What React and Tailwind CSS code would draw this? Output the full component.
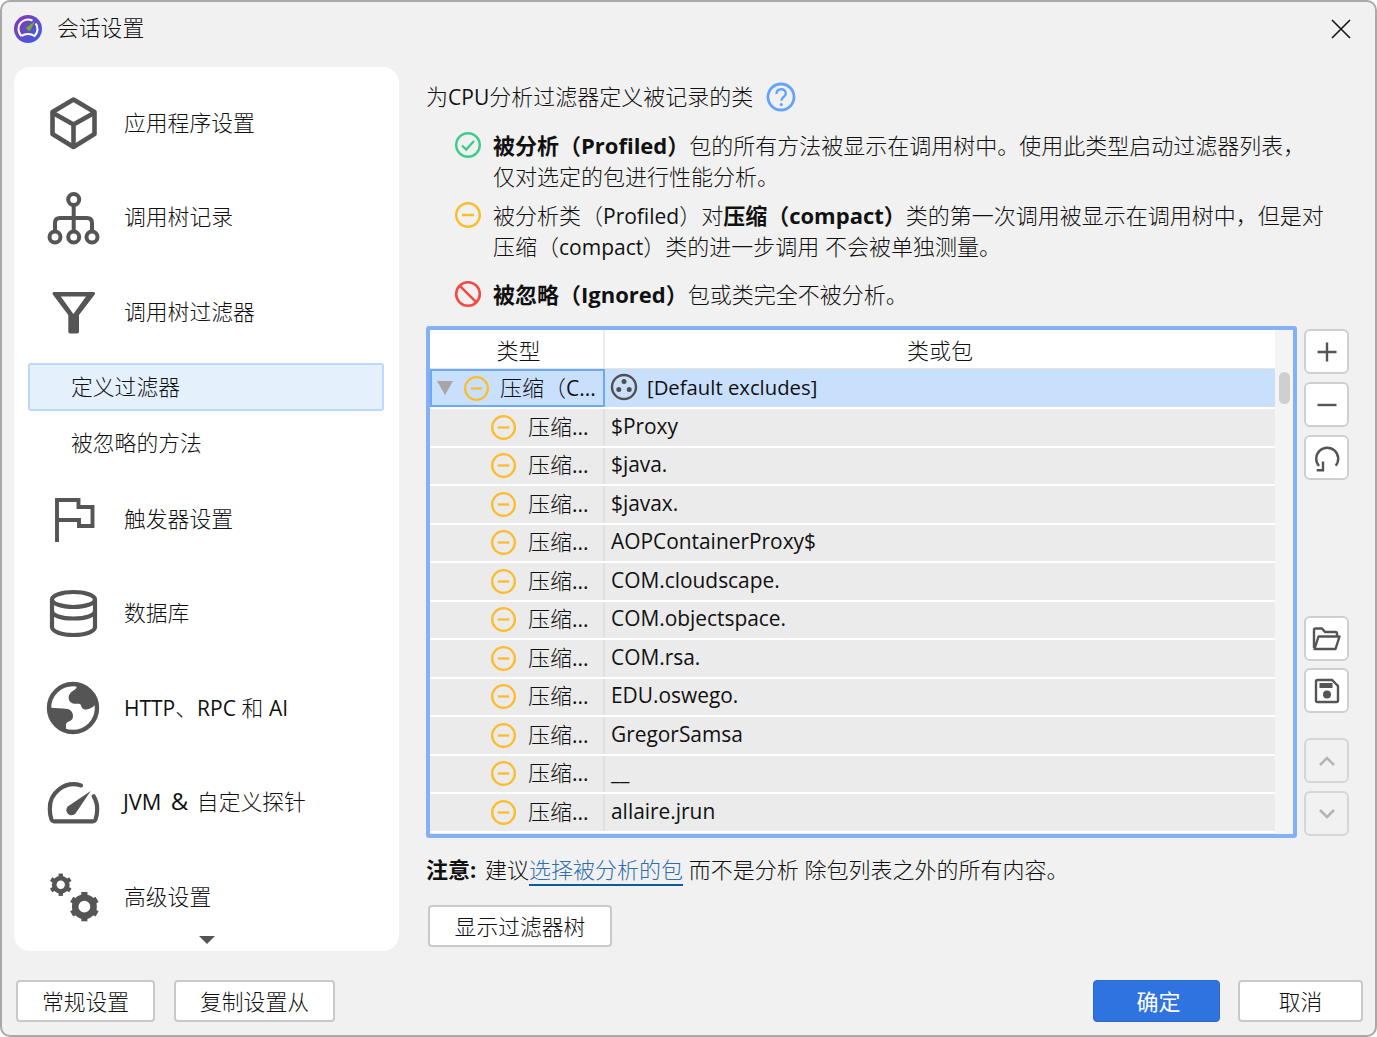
import React from "react";

const FONT = '"Open Sans","Noto Sans CJK SC",sans-serif';
const Dark = "#555555";

const Minus = ({ size = 28 }) => (
  <svg width={size} height={size} viewBox="0 0 28 28" className="shrink-0">
    <circle cx="14" cy="14" r="11.8" fill="none" stroke="#fdbc2c" strokeWidth="2.4" />
    <line x1="8" y1="14" x2="20" y2="14" stroke="#fdbc2c" strokeWidth="2.4" />
  </svg>
);
const Check = () => (
  <svg width="28" height="28" viewBox="0 0 28 28" className="shrink-0">
    <circle cx="14" cy="14" r="11.8" fill="none" stroke="#3ecb8a" strokeWidth="2.4" />
    <path d="M8 14.5l4.2 4L20 10" fill="none" stroke="#3ecb8a" strokeWidth="2.4" />
  </svg>
);
const Ban = () => (
  <svg width="28" height="28" viewBox="0 0 28 28" className="shrink-0">
    <circle cx="14" cy="14" r="11.8" fill="none" stroke="#f44a45" strokeWidth="2.6" />
    <line x1="5.8" y1="5.8" x2="22.2" y2="22.2" stroke="#f44a45" strokeWidth="2.6" />
  </svg>
);

const Cube = () => (
  <svg width="56" height="56" viewBox="0 0 56 56" fill="none" stroke={Dark} strokeWidth="4.6" strokeLinejoin="round">
    <path d="M28.500 4.500L49.500 17v22L28.500 52 7.500 39V17z" />
    <path d="M8 18l20.500 11.500L49 18M28.500 29.500V52" />
  </svg>
);
const TreeIcon = () => (
  <svg width="56" height="56" viewBox="0 0 56 56" fill="none" stroke={Dark} strokeWidth="4">
    <circle cx="28.700" cy="9.500" r="5.500" />
    <circle cx="10" cy="47" r="5.500" />
    <circle cx="28.700" cy="47" r="5.500" />
    <circle cx="47" cy="47" r="5.500" />
    <path d="M28.700 15v26.500M10 41.500V33q0-5 5-5h27q5 0 5 5v8.500" />
  </svg>
);
const FunnelIcon = () => (
  <svg width="56" height="56" viewBox="0 0 56 56" fill={Dark}>
    <path d="M9 8h39.500a1.500 1.500 0 0 1 1.200 2.400L34 31v16.500a2 2 0 0 1-2 2h-6.700a2 2 0 0 1-2-2V31L7.800 10.400A1.500 1.500 0 0 1 9 8zM15.800 12.400L28.400 30 41 12.400z" fillRule="evenodd" />
  </svg>
);
const FlagIcon = () => (
  <svg width="56" height="56" viewBox="0 0 56 56" fill="none" stroke={Dark} strokeWidth="3.900">
    <path d="M12 51V9h21.500v7h14v19H34v-6H12" />
  </svg>
);
const DbIcon = () => (
  <svg width="56" height="56" viewBox="0 0 56 56" fill="none" stroke={Dark} strokeWidth="4.200">
    <ellipse cx="28.500" cy="13.500" rx="21.500" ry="7.500" />
    <path d="M7 13.500V41c0 4.500 9.600 8 21.500 8S50 45.500 50 41V13.500" />
    <path d="M7 25c0 4.500 9.600 7.500 21.500 7.500S50 29.500 50 25" />
  </svg>
);
const GlobeIcon = () => (
  <svg width="56" height="56" viewBox="0 0 56 56">
    <circle cx="28" cy="28" r="24" fill="#fff" stroke={Dark} strokeWidth="4.400" />
    <path d="M31 5c.8 1.500.8 3-.5 4-1.500 1.500-4 2-5.500 4.500-1.500 2-1.800 5-.8 7 1 2 3 3.200 5.500 3.200h4.300c1.500 0 2 1.500 2.500 3 .7 2 2.500 3 5 2.800 3-.3 6-2.200 8.500-4.500.5-1 1-2 1-3C50 14 41 6 31 5z" fill={Dark} />
    <path d="M5 27.500c5 1.200 12 .5 17.500 1.500 3 .6 5.500 3.500 5.500 6.500 0 2.500-.5 4.500-3 5.500-2.500 1-4 1.500-4 4v5.500C12 48 4.500 38 5 27.500z" fill={Dark} />
  </svg>
);
const GaugeIcon = () => (
  <svg width="56" height="56" viewBox="0 0 56 56" fill="none" stroke={Dark} strokeWidth="4.200">
    <path d="M36 10.400A24 24 0 0 0 4.800 34c0 4 .5 7.500 1.700 10.500q.8 1.800 2.500 1.800h39q1.700 0 2.500-1.800c1.200-3 1.700-6.500 1.700-10.500 0-4.500-1.200-9-3.500-12.700" strokeLinecap="round" />
    <path d="M45.700 16L30.500 38.500a5.200 5.200 0 0 1-7.800-7z" fill={Dark} stroke="none" />
  </svg>
);
const Gear = ({ r, w, cx, cy, tw, th }) => (
  <g>
    <circle cx={cx} cy={cy} r={r} fill="none" stroke={Dark} strokeWidth={w} />
    {[0, 60, 120, 180, 240, 300].map((a) => (
      <rect key={a} x={cx - tw / 2} y={cy - r - w / 2 - th} width={tw} height={th + 1} fill={Dark} transform={`rotate(${a} ${cx} ${cy})`} />
    ))}
  </g>
);
const GearsIcon = () => (
  <svg width="64" height="60" viewBox="0 0 64 60">
    <Gear cx={18} cy={16} r={7.500} w={5.500} tw={5} th={2.500} />
    <Gear cx={45} cy={41} r={10.500} w={7.500} tw={7} th={2.500} />
  </svg>
);

const SideItem = ({ icon, label }) => (
  <div className="flex h-[94.5px] items-center pl-[31px]">
    <div className="flex w-[56px] justify-center">{icon}</div>
    <span className="ml-[23px] pb-[2px]">{label}</span>
  </div>
);

const Btn = ({ children, className = "" }) => (
  <div className={`flex items-center justify-center rounded-[4px] border-2 border-[#c9c9c9] bg-white text-[21.800px] ${className}`}>{children}</div>
);

const IconBtn = ({ children, className = "", off }) => (
  <div className={`flex h-[45px] w-[45px] items-center justify-center rounded-[6px] border-2 ${off ? "border-[#d6d6d6] bg-[#f1f1f1]" : "border-[#cfcfcf] bg-white"} ${className}`}>{children}</div>
);

const L = ({ children }) => <span className="text-[21px] font-normal leading-none">{children}</span>;

const rows = ["$Proxy", "$java.", "$javax.", "AOPContainerProxy$", "COM.cloudscape.", "COM.objectspace.", "COM.rsa.", "EDU.oswego.", "GregorSamsa", "__", "allaire.jrun"];

export default function App() {
  return (
    <div className="flex h-[1037px] w-[1377px] flex-col overflow-hidden rounded-[10px] border-2 border-[#a9a9a9] bg-[#f1f1f1] text-[22px] font-light leading-[31px] text-[#111111]" style={{ fontFamily: FONT }}>
      <div className="flex h-[53px] shrink-0 items-center pl-[12px] pr-[24px] text-[21.800px]">
        <svg width="28" height="28" viewBox="0 0 28 28" className="shrink-0">
          <defs>
            <linearGradient id="lg" x1="0" y1="0" x2="1" y2="1">
              <stop offset="0" stopColor="#8a34b4" />
              <stop offset="1" stopColor="#3a62e0" />
            </linearGradient>
          </defs>
          <circle cx="14" cy="14" r="14" fill="url(#lg)" />
          <path d="M7.500 21c-2-2-3-4.500-3-7a9.500 9.500 0 0 1 14-8.300M21.500 8.500c1.500 1.500 2 3.500 2 5.500 0 2.500-1 5-3 7-2-1.500-4-2-6.500-2s-4.500.5-6.500 2" fill="none" stroke="#fff" strokeWidth="2" />
          <path d="M21 6l-4.500 9a2.500 2.500 0 0 1-4-2.500z" fill="#6fb226" />
        </svg>
        <span className="ml-[15px] pb-[2px]">会话设置</span>
        <svg width="20" height="20" viewBox="0 0 20 20" className="ml-auto" fill="none" stroke="#1a1a1a" strokeWidth="1.700">
          <path d="M1 1l18 18M19 1L1 19" />
        </svg>
      </div>
      <div className="mt-[12px] flex h-[884px] shrink-0 pl-[12px]">
        <div className="relative h-full w-[385px] shrink-0 rounded-[16px] bg-white pt-[9px] text-[21.800px]">
          <SideItem icon={<Cube />} label="应用程序设置" />
          <SideItem icon={<TreeIcon />} label="调用树记录" />
          <SideItem icon={<FunnelIcon />} label="调用树过滤器" />
          <div className="ml-[14px] mt-[3.500px] flex h-[48px] w-[356px] items-center rounded-[3px] border-2 border-[#bcd8fa] bg-[#e5f0fd] pb-[2px] pl-[41px]">定义过滤器</div>
          <div className="flex h-[61px] items-center pl-[57px] pt-[2px]">被忽略的方法</div>
          <SideItem icon={<FlagIcon />} label="触发器设置" />
          <SideItem icon={<DbIcon />} label="数据库" />
          <SideItem icon={<GlobeIcon />} label={<><L>HTTP</L>、<L>RPC</L> 和 <L>AI</L></>} />
          <SideItem icon={<GaugeIcon />} label={<><span className="ml-[-1px] font-normal">JVM</span><span className="ml-[3px] text-[24px] font-normal leading-none"> &amp;</span><span className="ml-[3px]"> 自定义探针</span></>} />
          <SideItem icon={<GearsIcon />} label="高级设置" />
          <div className="absolute bottom-[7px] left-[185px] h-0 w-0 border-x-[8px] border-t-[8px] border-x-transparent border-t-[#555555]" />
        </div>
        <div className="ml-[27px] flex min-w-0 flex-1 flex-col">
          <div className="mt-[14px] flex h-[31px] items-center">
            <span>为<L>CPU</L>分析过滤器定义被记录的类</span>
            <svg width="30" height="30" viewBox="0 0 30 30" className="ml-[13px]">
              <circle cx="15" cy="15" r="13" fill="none" stroke="#62a4fb" strokeWidth="2.800" />
              <path d="M10.500 12c0-3 2-4.800 4.700-4.800s4.600 1.700 4.600 4.200c0 3.600-4.500 3.400-4.500 7.400" fill="none" stroke="#62a4fb" strokeWidth="2.400" />
              <circle cx="15.300" cy="22.500" r="1.600" fill="#62a4fb" />
            </svg>
          </div>
          <div className="ml-[28px] mt-[18px] flex">
            <div className="mr-[11px] mt-[1px]"><Check /></div>
            <p className="w-[840px]"><b className="font-bold">被分析（Profiled）</b>包的所有方法被显示在调用树中。使用此类型启动过滤器列表，<br />仅对选定的包进行性能分析。</p>
          </div>
          <div className="ml-[28px] mt-[8px] flex">
            <div className="mr-[11px] mt-[1px]"><Minus /></div>
            <p className="w-[840px]">被分析类（<L>Profiled</L>）对<b className="font-bold">压缩（compact）</b>类的第一次调用被显示在调用树中，但是对<br />压缩（<L>compact</L>）类的进一步调用 不会被单独测量。</p>
          </div>
          <div className="ml-[28px] mt-[17px] flex">
            <div className="mr-[11px] mt-[1px]"><Ban /></div>
            <p><b className="font-bold">被忽略（Ignored）</b>包或类完全不被分析。</p>
          </div>
          <div className="mt-[16px] flex">
            <div className="h-[512px] w-[871px] shrink-0 overflow-hidden rounded-[3px] border-[4px] border-[#86b0f5] bg-white">
              <div className="flex h-full">
                <div className="w-[845px] shrink-0">
                  <div className="flex h-[39px] border-b border-[#e4e4e4]">
                    <div className="flex w-[175px] items-center justify-center border-r-2 border-[#ececec] pl-[4px] pt-[2px]">类型</div>
                    <div className="flex flex-1 items-center justify-center pt-[2px]">类或包</div>
                  </div>
                  <div className="flex h-[38px] bg-[#c9e0fd]">
                    <div className="flex w-[175px] items-center border-2 border-[#6fa8f3] pl-[5px]">
                      <div className="h-0 w-0 border-x-[8px] border-t-[14px] border-x-transparent border-t-[#a6a6a6]" />
                      <div className="ml-[10px]"><Minus size={27} /></div>
                      <span className="ml-[10px] whitespace-nowrap pb-[2px]">压缩（<L>C...</L></span>
                    </div>
                    <div className="flex flex-1 items-center pl-[5px] pb-[2px]">
                      <svg width="28" height="28" viewBox="0 0 28 28">
                        <circle cx="14" cy="14" r="12" fill="none" stroke="#505050" strokeWidth="2.400" />
                        <circle cx="14" cy="8.500" r="2.500" fill="#505050" />
                        <circle cx="8.800" cy="16.500" r="2.500" fill="#505050" />
                        <circle cx="19.200" cy="16.500" r="2.500" fill="#505050" />
                      </svg>
                      <span className="ml-[9px] text-[20.300px] font-normal">[Default excludes]</span>
                    </div>
                  </div>
                  {rows.map((r) => (
                    <div key={r} className="flex h-[38.500px] border-t-2 border-white bg-[#ebebeb]">
                      <div className="flex w-[175px] items-center border-r-2 border-[#e0e0e0] pl-[60px]">
                        <Minus size={27} />
                        <span className="ml-[11px] whitespace-nowrap pb-[2px]">压缩<L>...</L></span>
                      </div>
                      <div className="flex flex-1 items-center pb-[2px] pl-[6px] text-[20.900px] font-normal">{r}</div>
                    </div>
                  ))}
                  <div className="h-[3px] border-t-2 border-white bg-[#ebebeb]" />
                </div>
                <div className="relative flex-1 bg-[#f4f4f4]">
                  <div className="absolute left-[4px] top-[42px] h-[32px] w-[11px] rounded-full bg-[#cfcfcf]" />
                </div>
              </div>
            </div>
            <div className="ml-[7px] flex flex-col pt-[3px]">
              <IconBtn>
                <svg width="22" height="22" viewBox="0 0 22 22" fill="none" stroke={Dark} strokeWidth="2.400"><path d="M11 1.500v19M1.500 11h19" /></svg>
              </IconBtn>
              <IconBtn className="mt-[8px]">
                <svg width="22" height="22" viewBox="0 0 22 22" fill="none" stroke={Dark} strokeWidth="2.400"><path d="M1.500 11h19" /></svg>
              </IconBtn>
              <IconBtn className="mt-[8px]">
                <svg width="28" height="28" viewBox="0 0 28 28" fill="none" stroke={Dark} strokeWidth="2.400"><path d="M22.700 21.700A11 11 0 1 0 6 22M10 17.500v8.700H3.700" /></svg>
              </IconBtn>
              <IconBtn className="mt-[136px]">
                <svg width="30" height="26" viewBox="0 0 30 26" fill="none" stroke={Dark} strokeWidth="2.400" strokeLinejoin="round"><path d="M2 22V4q0-1.500 1.500-1.500h6.500l3 3.500h10.500q1.500 0 1.500 1.500V10M2.500 23l4-12.500h21L23.500 23z" /></svg>
              </IconBtn>
              <IconBtn className="mt-[7px]">
                <svg width="26" height="26" viewBox="0 0 26 26"><path d="M2 3.500Q2 2 3.500 2H18l6 6v14.500q0 1.500-1.500 1.500h-19Q2 24 2 22.500z" fill="none" stroke={Dark} strokeWidth="2.400" /><rect x="5.500" y="5" width="13" height="5" fill={Dark} /><circle cx="13" cy="16.500" r="4" fill={Dark} /></svg>
              </IconBtn>
              <IconBtn off className="mt-[25px]">
                <svg width="20" height="14" viewBox="0 0 20 14" fill="none" stroke="#b5b5b5" strokeWidth="2.600"><path d="M3 11l7-7 7 7" /></svg>
              </IconBtn>
              <IconBtn off className="mt-[8px]">
                <svg width="20" height="14" viewBox="0 0 20 14" fill="none" stroke="#b5b5b5" strokeWidth="2.600"><path d="M3 3l7 7 7-7" /></svg>
              </IconBtn>
            </div>
          </div>
          <p className="mt-[16px] h-[31px] whitespace-nowrap"><b className="font-bold">注意: </b><span className="ml-[3px]">建议</span><span className="border-b-2 border-[#0f5a9c] text-[#2f6faf]">选择被分析的包</span> 而不是分析 除包列表之外的所有内容。</p>
          <Btn className="ml-[2px] mt-[20px] h-[42px] w-[184px]">显示过滤器树</Btn>
        </div>
      </div>
      <div className="flex flex-1 items-start pl-[14px] pr-[12px] pt-[29px]">
        <Btn className="h-[42px] w-[139px]">常规设置</Btn>
        <Btn className="ml-[19px] h-[42px] w-[161px]">复制设置从</Btn>
        <div className="ml-auto flex h-[42px] w-[127px] items-center justify-center rounded-[4px] border border-[#2c69c9] bg-[#2e73e0] pl-[4px] font-normal text-white">确定</div>
        <Btn className="ml-[18px] h-[42px] w-[125px]">取消</Btn>
      </div>
    </div>
  );
}
